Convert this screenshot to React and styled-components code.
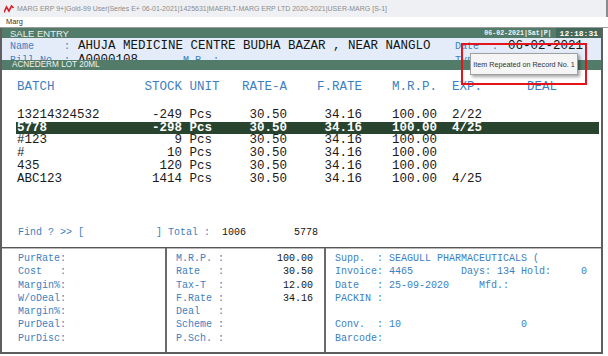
import React from 'react';
import styled, { createGlobalStyle } from 'styled-components';

const mono = '"Liberation Mono", "Courier New", monospace';
const sans = '"Liberation Sans", Arial, sans-serif';
const blue = '#3d80c2';
const green = '#527b6a';

const GlobalStyle = createGlobalStyle`
  html, body {
    margin: 0;
    padding: 0;
    background: #fff;
  }
`;

const rows = [
  { batch: '13214324532', stock: '-249', unit: 'Pcs', rate: '30.50', frate: '34.16', mrp: '100.00', exp: '2/22' },
  { batch: '5778', stock: '-298', unit: 'Pcs', rate: '30.50', frate: '34.16', mrp: '100.00', exp: '4/25', selected: true },
  { batch: '#123', stock: '9', unit: 'Pcs', rate: '30.50', frate: '34.16', mrp: '100.00', exp: '' },
  { batch: '#', stock: '10', unit: 'Pcs', rate: '30.50', frate: '34.16', mrp: '100.00', exp: '' },
  { batch: '435', stock: '120', unit: 'Pcs', rate: '30.50', frate: '34.16', mrp: '100.00', exp: '' },
  { batch: 'ABC123', stock: '1414', unit: 'Pcs', rate: '30.50', frate: '34.16', mrp: '100.00', exp: '4/25' },
];

const leftLines = ['PurRate:', 'Cost   :', 'Margin%:', 'W/oDeal:', 'Margin%:', 'PurDeal:', 'PurDisc:'];

const midLines = [
  ['M.R.P. :', '100.00'],
  ['Rate   :', '30.50'],
  ['Tax-T  :', '12.00'],
  ['F.Rate :', '34.16'],
  ['Deal   :', ''],
  ['Scheme :', ''],
  ['P.Sch. :', ''],
];

const rightLines = [
  'Supp.  : SEAGULL PHARMACEUTICALS (',
  'Invoice: 4465        Days: 134 Hold:     0',
  'Date   : 25-09-2020     Mfd.:',
  'PACKIN :',
  ' ',
  'Conv.  : 10                    0',
  'Barcode:',
];

const App = () => {
  return (
    <>
      <GlobalStyle />
      <Frame>
        <TitleBar>
          <svg width="10" height="8" viewBox="0 0 10 8">
            <polyline points="0,7.5 2.5,2 5,6 7.5,1 9.5,3" fill="none" stroke="#d4202a" strokeWidth="1.6" />
          </svg>
          MARG ERP 9+|Gold-99 User|Series E+ 06-01-2021|1425631|MAERLT-MARG ERP LTD 2020-2021|USER-MARG [S-1]
        </TitleBar>
        <MenuBar>Marg</MenuBar>
        <Window>
          <Banner>
            SALE ENTRY
            <Stamp>06-02-2021|Sat|P|</Stamp>
            <Clock>12:18:31</Clock>
          </Banner>
          <Info>
            <InfoRow>
              <Label>Name</Label>
              <Label>:</Label>
              <Value>AHUJA MEDICINE CENTRE BUDHA BAZAR , NEAR NANGLO</Value>
              <Label>Date</Label>
              <Label>:</Label>
              <Value>06-02-2021</Value>
            </InfoRow>
            <InfoRow>
              <Label>Bill No.</Label>
              <Label>:</Label>
              <Value>
                A0000108<SubLabel>M.R. :</SubLabel>
              </Value>
              <Label>Type</Label>
              <Label>:</Label>
              <Value />
            </InfoRow>
          </Info>
          <ItemBar>ACNEDERM LOT 20ML</ItemBar>
          <BatchArea>
            <Row $head>
              <Cell>BATCH</Cell>
              <Cell>STOCK</Cell>
              <Cell $pad={1}>UNIT</Cell>
              <Cell $right>RATE-A</Cell>
              <Cell $right>F.RATE</Cell>
              <Cell $right>M.R.P.</Cell>
              <Cell $pad={2}>EXP.</Cell>
              <Cell>DEAL</Cell>
            </Row>
            <RowList>
              {rows.map((r, i) => (
                <Row key={i} $selected={r.selected}>
                  <Cell>{r.batch}</Cell>
                  <Cell $right>{r.stock}</Cell>
                  <Cell $pad={1}>{r.unit}</Cell>
                  <Cell $right>{r.rate}</Cell>
                  <Cell $right>{r.frate}</Cell>
                  <Cell $right>{r.mrp}</Cell>
                  <Cell $pad={2}>{r.exp}</Cell>
                  <Cell />
                </Row>
              ))}
            </RowList>
            <FindLine>
              {'Find ? >> [            ] Total :  '}
              <Num>1006</Num>
              {'        '}
              <Num>5778</Num>
            </FindLine>
          </BatchArea>
          <Details>
            <Panel $pl={16}>
              {leftLines.map((l, i) => (
                <Line key={i}>{l}</Line>
              ))}
            </Panel>
            <Panel $pl={9} $divider>
              {midLines.map(([l, v], i) => (
                <MidLine key={i}>
                  <span>{l}</span>
                  <Num>{v}</Num>
                </MidLine>
              ))}
            </Panel>
            <Panel $pl={9} $divider>
              {rightLines.map((l, i) => (
                <Line key={i}>{l}</Line>
              ))}
            </Panel>
          </Details>
        </Window>
        <Alert>
          <Tip>Item Repeated on Record No. 1</Tip>
        </Alert>
      </Frame>
    </>
  );
};

const Frame = styled.div`
  position: relative;
  width: 608px;
  height: 356px;
  overflow: hidden;
  background: #fff;
  display: flex;
  flex-direction: column;
`;

const TitleBar = styled.div`
  height: 17px;
  flex: none;
  display: flex;
  align-items: center;
  gap: 3px;
  padding-left: 4px;
  background: #eef0f3;
  color: #8c8c8c;
  font-family: ${sans};
  font-size: 7px;
  white-space: nowrap;
  border-right: 2px solid #8a8a8a;
  box-sizing: border-box;
`;

const MenuBar = styled.div`
  height: 10px;
  flex: none;
  padding-left: 6px;
  background: #fff;
  border-bottom: 1px solid #9a9a9a;
  color: #333;
  font-family: ${sans};
  font-size: 7.4px;
  line-height: 10px;
`;

const Window = styled.div`
  width: 603px;
  height: 326px;
  flex: none;
  box-sizing: border-box;
  border: 2px solid #5e5e5e;
  border-top: none;
  display: flex;
  flex-direction: column;
`;

const Banner = styled.div`
  height: 10px;
  display: flex;
  align-items: center;
  padding-left: 8px;
  background: ${green};
  color: #e8efea;
  font-family: ${sans};
  font-size: 9.5px;
`;

const Stamp = styled.span`
  margin-left: auto;
  font-family: ${mono};
  font-size: 6.6px;
  font-weight: bold;
  color: #f2f5f3;
`;

const Clock = styled.span`
  height: 100%;
  display: flex;
  align-items: center;
  margin-left: 4px;
  padding: 0 3px 0 4px;
  background: #44695a;
  font-family: ${mono};
  font-size: 8px;
  font-weight: bold;
  color: #fff;
`;

const Info = styled.div`
  height: 22px;
  box-sizing: border-box;
  padding: 1px 0 0 8px;
  overflow: hidden;
  background: #e3ecf8;
`;

const InfoRow = styled.div`
  display: grid;
  grid-template-columns: 54px 14px 377px 37px 16px 1fr;
  align-items: center;
  height: 14px;
  white-space: nowrap;
`;

const Label = styled.span`
  font-family: ${mono};
  font-size: 10px;
  color: ${blue};
`;

const SubLabel = styled(Label)`
  margin-left: 45px;
`;

const Value = styled.span`
  font-family: ${mono};
  font-size: 12.5px;
  color: #151515;
`;

const ItemBar = styled.div`
  height: 10px;
  padding-left: 10px;
  background: ${green};
  color: #eef3f0;
  font-family: ${sans};
  font-size: 8.2px;
  line-height: 10px;
`;

const BatchArea = styled.div`
  height: 177px;
  box-sizing: border-box;
  padding: 11px 2px 8px 14px;
  display: flex;
  flex-direction: column;
`;

const RowList = styled.div`
  margin-top: 15px;
`;

const Row = styled.div`
  display: grid;
  grid-template-columns: 17ch 5ch 7ch 7ch 10ch 10ch 12ch 1fr;
  padding-left: 1px;
  font-family: ${mono};
  font-size: 12.5px;
  line-height: 12.8px;
  white-space: pre;
  color: ${(p) => (p.$selected ? '#fff' : p.$head ? blue : '#1a1a1a')};
  background: ${(p) => (p.$selected ? '#28442f' : 'transparent')};
  font-weight: ${(p) => (p.$selected ? 'bold' : 'normal')};
`;

const Cell = styled.span`
  text-align: ${(p) => (p.$right ? 'right' : 'left')};
  padding-left: ${(p) => (p.$pad ? `${p.$pad}ch` : '0')};
`;

const FindLine = styled.div`
  margin-top: auto;
  padding-left: 2px;
  font-family: ${mono};
  font-size: 10px;
  line-height: 12px;
  white-space: pre;
  color: ${blue};
`;

const Num = styled.span`
  color: #151515;
`;

const Details = styled.div`
  height: 105px;
  box-sizing: border-box;
  border-top: 1px solid #555;
  box-shadow: inset 0 1px 0 #b8b8b8;
  display: grid;
  grid-template-columns: 163px 159px 1fr;
`;

const Panel = styled.div`
  box-sizing: border-box;
  padding: 4px 11px 0 ${(p) => p.$pl}px;
  border-left: ${(p) => (p.$divider ? '2px solid #6a6a6a' : 'none')};
  font-family: ${mono};
  font-size: 10px;
  line-height: 13.3px;
  color: ${blue};
`;

const Line = styled.div`
  white-space: pre;
  height: 13.3px;
`;

const MidLine = styled.div`
  display: flex;
  justify-content: space-between;
  white-space: pre;
  height: 13.3px;
`;

const Alert = styled.div`
  position: absolute;
  left: 461px;
  top: 43px;
  width: 126px;
  height: 42px;
  box-sizing: border-box;
  border: 2px solid #e3141c;
  padding: 8px 0 0 7px;
`;

const Tip = styled.div`
  width: 108px;
  height: 22px;
  box-sizing: border-box;
  display: flex;
  align-items: center;
  justify-content: center;
  background: #f5f5f5;
  border: 1px solid #a0a0a0;
  box-shadow: 2px 2px 3px rgba(0, 0, 0, 0.35);
  color: #333;
  font-family: ${sans};
  font-size: 7.2px;
  white-space: nowrap;
`;

export default App;
